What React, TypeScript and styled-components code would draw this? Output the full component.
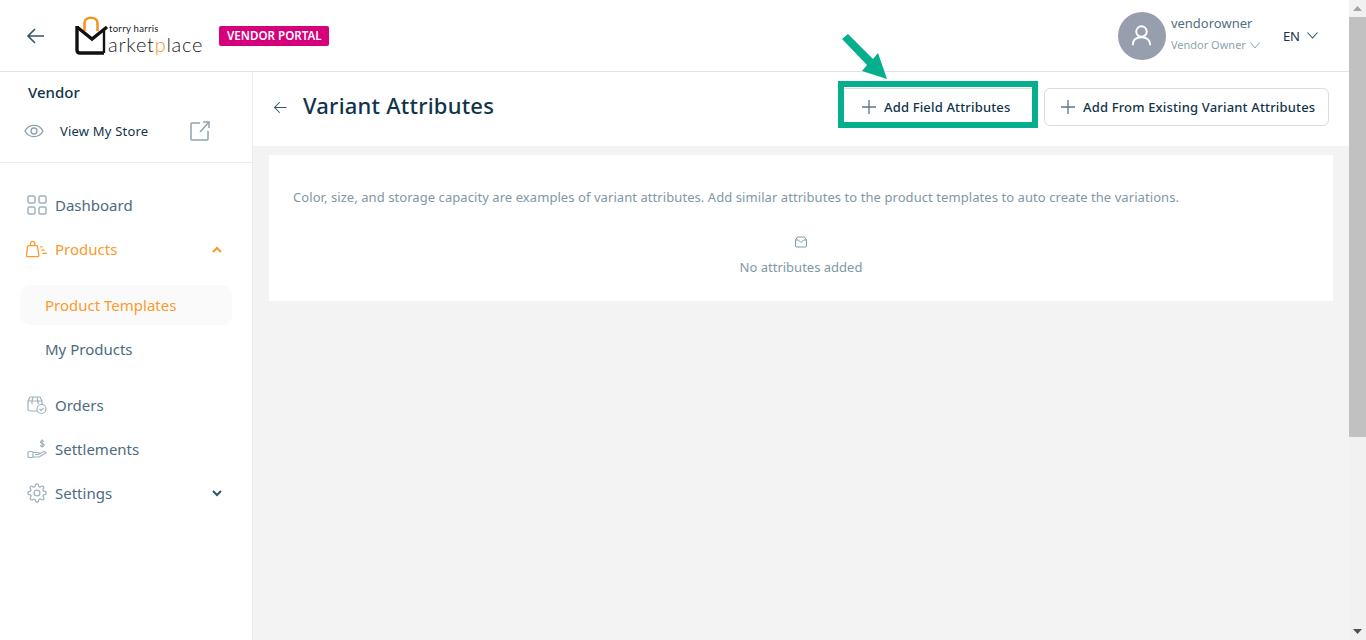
import React from 'react';
import styled, { createGlobalStyle } from 'styled-components';

const Global = createGlobalStyle`
  html, body { margin: 0; padding: 0; }
  body { font-family: "Noto Sans", "Open Sans", sans-serif; background: #f3f3f3; color: #12344a; }
`;

const Frame = styled.div`
  position: relative;
  height: 640px;
  overflow: hidden;
  display: flex;
`;
const Page = styled.div`
  flex: 1;
  min-width: 0;
  display: flex;
  flex-direction: column;
`;
const ScrollTrack = styled.div`
  width: 17px;
  flex: none;
  background: #f1f1f1;
  display: flex;
  flex-direction: column;
`;
const ScrollArrow = styled.span`
  height: 17px;
  flex: none;
  display: flex;
  align-items: center;
  justify-content: center;
`;
const ScrollThumb = styled.span`
  height: 420px;
  flex: none;
  background: #c1c1c1;
`;
const ScrollRest = styled.span`
  flex: 1;
`;
const Header = styled.header`
  height: 71px;
  background: #fff;
  border-bottom: 1px solid #e4e4e4;
  display: flex;
  align-items: center;
  padding: 0 31px 0 26px;
  flex: none;
`;
const BackBtn = styled.span`
  display: flex;
  width: 20px;
  margin: 1px 29px 0 0;
`;
const Logo = styled.div`
  position: relative;
  width: 128px;
  height: 42px;
  margin-right: 16px;
  margin-top: 3px;
`;
const LogoTop = styled.span`
  position: absolute;
  left: 34px;
  top: 7px;
  font: 400 9.5px/12px "Lato", sans-serif;
  color: #222;
  letter-spacing: .3px;
  white-space: nowrap;
`;
const LogoMain = styled.span`
  position: absolute;
  left: 33px;
  top: 15px;
  font: 300 20px/26px "Lato", sans-serif;
  color: #222;
  letter-spacing: .75px;
  white-space: nowrap;
`;
const LogoP = styled.span`
  color: #f7941d;
`;
const LogoSvg = styled.svg`
  position: absolute;
  left: 0;
  top: 0;
`;
const Badge = styled.span`
  background: #d6007b;
  color: #fff;
  font-size: 11.6px;
  font-weight: 600;
  line-height: 20px;
  height: 20px;
  padding: 0 7px 0 8px;
  border-radius: 2px;
  margin-top: 1px;
`;
const HeaderRight = styled.div`
  margin-left: auto;
  display: flex;
  align-items: center;
`;
const Avatar = styled.span`
  width: 48px;
  height: 48px;
  border-radius: 50%;
  background: #979eae;
  display: flex;
  align-items: center;
  justify-content: center;
  margin-right: 5px;
`;
const UserInfo = styled.div`
  width: 112px;
  display: flex;
  flex-direction: column;
  gap: 4px;
  margin-top: -3px;
`;
const UserName = styled.span`
  font-size: 13px;
  line-height: 18px;
  color: #516f80;
`;
const UserRole = styled.span`
  font-size: 11px;
  line-height: 18px;
  color: #8ba3b2;
  display: flex;
  align-items: center;
  gap: 4px;
`;
const Lang = styled.span`
  font-size: 13px;
  color: #12344a;
  display: flex;
  align-items: center;
  gap: 7px;
`;
const Body = styled.div`
  flex: 1;
  display: flex;
`;
const Sidebar = styled.aside`
  width: 252px;
  flex: none;
  background: #fff;
  border-right: 1px solid #ececec;
`;
const VendorBox = styled.div`
  height: 91px;
  padding: 10px 0 0 28px;
  box-sizing: border-box;
  border-bottom: 1px solid #ececec;
`;
const VendorTitle = styled.div`
  font-size: 15px;
  line-height: 20px;
  font-weight: 500;
  color: #12344a;
`;
const StoreRow = styled.div`
  display: flex;
  align-items: center;
  margin: 17px 0 0 -4px;
  height: 24px;
`;
const StoreText = styled.span`
  font-size: 13px;
  letter-spacing: .2px;
  color: #12344a;
  margin-left: 16px;
  width: 130px;
`;
const Nav = styled.nav`
  padding-top: 20px;
  display: flex;
  flex-direction: column;
`;
const NavItem = styled.div<{ $active?: boolean }>`
  height: 44px;
  display: flex;
  align-items: center;
  padding: 0 30px 0 26px;
  font-size: 15px;
  color: ${p => (p.$active ? '#fb9a2c' : '#4d6b7d')};
`;
const NavIcon = styled.span`
  width: 22px;
  height: 22px;
  margin-right: 7px;
  display: flex;
  align-items: center;
  justify-content: center;
`;
const NavLabel = styled.span`
  flex: 1;
`;
const SubList = styled.div`
  margin: 14px 0 10px;
  display: flex;
  flex-direction: column;
`;
const SubItem = styled.div<{ $active?: boolean }>`
  width: 212px;
  height: 40px;
  margin: 0 0 4px 20px;
  padding-left: 25px;
  box-sizing: border-box;
  display: flex;
  align-items: center;
  font-size: 15px;
  border-radius: 10px;
  color: ${p => (p.$active ? '#fb9a2c' : '#4d6b7d')};
  background: ${p => (p.$active ? '#fafafa' : 'transparent')};
`;
const Main = styled.main`
  flex: 1;
  min-width: 0;
  display: flex;
  flex-direction: column;
`;
const TopBar = styled.div`
  height: 74px;
  background: #fff;
  display: flex;
  align-items: center;
  padding: 0 20px 4px;
  box-sizing: border-box;
  position: relative;
  flex: none;
`;
const TitleBack = styled.span`
  display: flex;
  margin-right: 15px;
`;
const Title = styled.h1`
  margin: 0 0 4px;
  font-size: 22px;
  line-height: 30px;
  font-weight: 500;
  letter-spacing: .22px;
  color: #12344a;
  flex: 1;
`;
const Actions = styled.div`
  display: flex;
  align-items: center;
  gap: 12px;
`;
const ActionBtn = styled.button<{ $highlight?: boolean }>`
  height: 38px;
  box-sizing: border-box;
  background: #fff;
  border: 1px solid ${p => (p.$highlight ? '#fff' : '#dcdcdc')};
  border-top-color: #dcdcdc;
  border-radius: ${p => (p.$highlight ? '0' : '6px')};
  font: 500 13px "Noto Sans", sans-serif;
  letter-spacing: .16px;
  color: #12344a;
  display: flex;
  align-items: center;
  gap: 8px;
  padding: 0 0 0 ${p => (p.$highlight ? '17px' : '16px')};
  width: ${p => (p.$highlight ? '188px' : '285px')};
`;
const Highlight = styled.span`
  position: absolute;
  left: 585px;
  top: 9px;
  width: 200px;
  height: 47px;
  box-sizing: border-box;
  border: 6px solid #05ae8d;
  pointer-events: none;
`;
const Arrow = styled.svg`
  position: absolute;
  left: 842px;
  top: 33px;
`;
const Card = styled.section`
  margin: 9px 16px 0;
  height: 146px;
  background: #fff;
  padding: 33px 24px 0;
  box-sizing: border-box;
`;
const Hint = styled.p`
  margin: 0;
  font-size: 13px;
  line-height: 18px;
  letter-spacing: .067px;
  color: #7f98a6;
`;
const Empty = styled.div`
  margin-top: 30px;
  display: flex;
  flex-direction: column;
  align-items: center;
  gap: 10px;
  font-size: 13px;
  line-height: 18px;
  color: #7f98a6;
`;

const IconStroke = '#9fb2bf';

const BackArrow = ({ size = 20 }: { size?: number }) => (
  <svg width={size} height={size} viewBox="0 0 20 20" fill="none" stroke="#2f5568" strokeWidth={size > 16 ? 1.6 : 1.4}>
    <path d="M18 10H2M9 3l-7 7 7 7" />
  </svg>
);
const Plus = () => (
  <svg width="14" height="14" viewBox="0 0 14 14" stroke="#5d7686" strokeWidth="1.3">
    <path d="M7 0v14M0 7h14" />
  </svg>
);

export default function App() {
  return (
    <Frame>
      <Global />
      <Page>
        <Header>
          <BackBtn><BackArrow /></BackBtn>
          <Logo>
            <LogoSvg width="42" height="42" viewBox="0 0 42 42" fill="none">
              <path d="M9.500 15V7C9.500 0 22.500 0 22.500 7V15" stroke="#f7941d" strokeWidth="2.600" />
              <path d="M2 11L17 23L32 11" stroke="#111" strokeWidth="3.400" />
              <path d="M2 10V34Q2 37 5 37H29" stroke="#111" strokeWidth="3.400" />
              <path d="M29 14V37" stroke="#111" strokeWidth="2.400" />
            </LogoSvg>
            <LogoTop>torry harris</LogoTop>
            <LogoMain>arket<LogoP>p</LogoP>lace</LogoMain>
          </Logo>
          <Badge>VENDOR PORTAL</Badge>
          <HeaderRight>
            <Avatar>
              <svg width="21" height="21" viewBox="0 0 24 24" fill="none" stroke="#fff" strokeWidth="2.200">
                <circle cx="12" cy="7.500" r="6" />
                <path d="M2 23c0-6 4-9 10-9s10 3 10 9" />
              </svg>
            </Avatar>
            <UserInfo>
              <UserName>vendorowner</UserName>
              <UserRole>
                Vendor Owner
                <svg width="10" height="7" viewBox="0 0 10 7" fill="none" stroke="#8ba3b2" strokeWidth="1"><path d="M.5 .5L5 6l4.500-5.500" /></svg>
              </UserRole>
            </UserInfo>
            <Lang>
              EN
              <svg width="11" height="7" viewBox="0 0 11 7" fill="none" stroke="#2f5568" strokeWidth="1.100"><path d="M.5 .5L5.500 6l5-5.500" /></svg>
            </Lang>
          </HeaderRight>
        </Header>
        <Body>
          <Sidebar>
            <VendorBox>
              <VendorTitle>Vendor</VendorTitle>
              <StoreRow>
                <svg width="20" height="14" viewBox="0 0 20 14" fill="none" stroke="#8ea3b0" strokeWidth="1.400">
                  <path d="M1 7c4-7.500 14-7.500 18 0-4 7.500-14 7.500-18 0z" />
                  <circle cx="10" cy="7" r="3" />
                </svg>
                <StoreText>View My Store</StoreText>
                <svg width="20" height="20" viewBox="0 0 20 20" fill="none" stroke="#8ea3b0" strokeWidth="1.500">
                  <path d="M10 2H2a1 1 0 0 0-1 1v15a1 1 0 0 0 1 1h15a1 1 0 0 0 1-1v-8" />
                  <path d="M10 11L19 1M13 1h6v6" />
                </svg>
              </StoreRow>
            </VendorBox>
            <Nav>
              <NavItem>
                <NavIcon>
                  <svg width="20" height="20" viewBox="0 0 20 20" fill="none" stroke={IconStroke} strokeWidth="1.500">
                    <rect x="1" y="1" width="7" height="7" rx="1.500" /><rect x="12" y="1" width="7" height="7" rx="1.500" />
                    <rect x="1" y="12" width="7" height="7" rx="1.500" /><rect x="12" y="12" width="7" height="7" rx="1.500" />
                  </svg>
                </NavIcon>
                <NavLabel>Dashboard</NavLabel>
              </NavItem>
              <NavItem $active>
                <NavIcon>
                  <svg width="22" height="18" viewBox="0 0 20 16" fill="none" stroke="#fb9a2c" strokeWidth="1.200">
                    <path d="M2.500 5h7a1 1 0 0 1 1 1l1.200 8a1 1 0 0 1-1 1H1.300a1 1 0 0 1-1-1l1.200-8a1 1 0 0 1 1-1z" /><path d="M4 5V3c0-2.500 4-2.500 4 0v2" />
                    <path d="M13 6h2M14 9h3M15 12h4" />
                  </svg>
                </NavIcon>
                <NavLabel>Products</NavLabel>
                <svg width="10" height="7" viewBox="0 0 10 7" fill="none" stroke="#fb9a2c" strokeWidth="2"><path d="M1 6l4-4 4 4" /></svg>
              </NavItem>
              <SubList>
                <SubItem $active>Product Templates</SubItem>
                <SubItem>My Products</SubItem>
              </SubList>
              <NavItem>
                <NavIcon>
                  <svg width="20" height="20" viewBox="0 0 20 20" fill="none" stroke={IconStroke} strokeWidth="1.200">
                    <path d="M10 16H3a2 2 0 0 1-2-2V6l2-4h10l2 4v4" /><path d="M1 6h14M6 2L5 6v3M10 2l1 4v3" />
                    <circle cx="14.500" cy="14" r="4.500" /><path d="M12.500 14l1.500 1.500 2.500-2.500" />
                  </svg>
                </NavIcon>
                <NavLabel>Orders</NavLabel>
              </NavItem>
              <NavItem>
                <NavIcon>
                  <svg width="20" height="20" viewBox="0 0 20 20" fill="none" stroke={IconStroke} strokeWidth="1.200">
                    <rect x="1" y="12.500" width="5" height="6" rx="1" />
                    <path d="M6 13.500h5c2 0 2 2 0 2H8M6 18h6l7-4c0-1.500-1.500-1.500-3-1l-4 2" />
                    <path d="M17 2.500c-1-1-3-1-3.500.2-.4 1 .6 1.500 1.700 1.800 1.200.3 2.200.8 1.800 1.900-.5 1.200-2.800 1.200-3.800.1M15.200 .5v8" />
                  </svg>
                </NavIcon>
                <NavLabel>Settlements</NavLabel>
              </NavItem>
              <NavItem>
                <NavIcon>
                  <svg width="20" height="20" viewBox="0 0 24 24" fill="none" stroke={IconStroke} strokeWidth="1.500">
                    <circle cx="12" cy="12" r="3.500" />
                    <path d="M19.400 15a1.650 1.650 0 0 0 .33 1.820l.06.06a2 2 0 1 1-2.830 2.830l-.06-.06a1.650 1.650 0 0 0-2.800 1.170V21a2 2 0 1 1-4 0v-.09A1.650 1.650 0 0 0 7.300 19.740l-.06.06a2 2 0 1 1-2.830-2.830l.06-.06a1.650 1.650 0 0 0-1.170-2.800H3a2 2 0 1 1 0-4h.09A1.650 1.650 0 0 0 4.260 7.300l-.06-.06a2 2 0 1 1 2.830-2.830l.06.06a1.650 1.650 0 0 0 2.800-1.170V3a2 2 0 1 1 4 0v.09a1.650 1.650 0 0 0 2.800 1.170l.06-.06a2 2 0 1 1 2.830 2.830l-.06.06a1.650 1.650 0 0 0 1.170 2.800H21a2 2 0 1 1 0 4h-.09a1.650 1.650 0 0 0-1.510 1z" />
                  </svg>
                </NavIcon>
                <NavLabel>Settings</NavLabel>
                <svg width="10" height="7" viewBox="0 0 10 7" fill="none" stroke="#2f5568" strokeWidth="2"><path d="M1 1l4 4 4-4" /></svg>
              </NavItem>
            </Nav>
          </Sidebar>
          <Main>
            <TopBar>
              <TitleBack><BackArrow size={15} /></TitleBack>
              <Title>Variant Attributes</Title>
              <Actions>
                <ActionBtn $highlight><Plus />Add Field Attributes</ActionBtn>
                <ActionBtn><Plus />Add From Existing Variant Attributes</ActionBtn>
              </Actions>
              <Highlight />
            </TopBar>
            <Card>
              <Hint>Color, size, and storage capacity are examples of variant attributes. Add similar attributes to the product templates to auto create the variations.</Hint>
              <Empty>
                <svg width="12" height="12" viewBox="0 0 12 12" fill="none" stroke="#7f98a6" strokeWidth="1">
                  <path d="M2.500 1h7l2 3v6a1 1 0 0 1-1 1h-9a1 1 0 0 1-1-1V4z" /><path d="M.5 4h3L6 6.500 8.500 4h3" />
                </svg>
                No attributes added
              </Empty>
            </Card>
          </Main>
        </Body>
      </Page>
      <ScrollTrack>
        <ScrollArrow>
          <svg width="9" height="5" viewBox="0 0 9 5"><path d="M4.500 0L9 5H0z" fill="#a3a3a3" /></svg>
        </ScrollArrow>
        <ScrollThumb />
        <ScrollRest />
        <ScrollArrow>
          <svg width="9" height="5" viewBox="0 0 9 5"><path d="M0 0h9L4.500 5z" fill="#505050" /></svg>
        </ScrollArrow>
      </ScrollTrack>
      <Arrow width="50" height="50" viewBox="0 0 50 50">
        <path d="M0 6L6 1L31 26L36 20L45 46L20 38L25 32Z" fill="#05ae8d" />
      </Arrow>
    </Frame>
  );
}
